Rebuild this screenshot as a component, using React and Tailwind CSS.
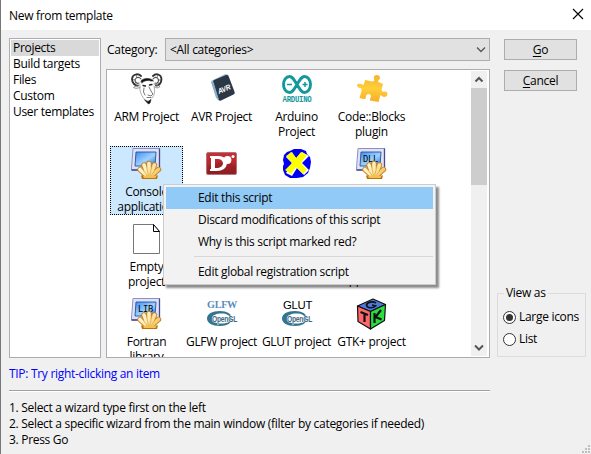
import React from "react";

function Gnu() {
  return (
    <svg width="32" height="32" viewBox="0 0 32 32" fill="none" stroke="#222" strokeLinecap="round">
      <path d="M10 3C7 0 1.500 1 1 6C1 10 4 13 7 12.500" strokeWidth="1.800" stroke="#333" />
      <path d="M10 6C8 3.500 4.500 4 4 7C4 9.500 6 11 8 10" strokeWidth="1.100" stroke="#555" />
      <path d="M22 3C25 0 30 1 30.500 6C30.500 10 28 13 25 12.500" strokeWidth="1.800" stroke="#333" />
      <path d="M22 6C24 3.500 27 4 27.500 7C27.500 9.500 26 11 24 10" strokeWidth="1.100" stroke="#555" />
      <path d="M1.500 7C2.500 6.500 3.500 6.500 4 7M3 11L5 9.500M5 2L6 4.500M30 7L27.500 7M28.500 11L26.500 9.500M27 2L26 4.500" strokeWidth=".6" />
      <path d="M10 8C12 4.500 20 4.500 22.500 8L20 8C17 7 13 7.500 11 10Z" fill="#111" strokeWidth=".6" />
      <path d="M9 12C6 13 4 13 2.500 14.500C5 16 7 15 9 14.500M23 11C25 12 27 12 29 13.500C27 15.500 25 15 23.500 14" stroke="#777" strokeWidth=".8" />
      <path d="M9 13C8 19 11 23 14 27M23 13C24 18 24 22 21 25" stroke="#999" strokeWidth=".8" />
      <path d="M12 12.500L14.500 13M18.500 12L21 11.500" strokeWidth="1.300" />
      <path d="M13 15L12.500 19L14 22M18 14L20 18L22 21L20 23L17 22M16 24.500L20 24.500" stroke="#666" strokeWidth=".9" />
      <path d="M14 27L17 28.500L20 26.500L19 30L17.500 31L15.500 29Z" fill="#111" strokeWidth=".7" />
    </svg>
  );
}

function Avr() {
  return (
    <svg width="32" height="32" viewBox="0 0 32 32">
      <path d="M5 8L19 1L22 1.500L29 20L25 22L13 28L10 25Z" fill="#a9c7dc" />
      <path d="M7 9Q7 7.500 8 7L20 2Q22 1.500 22.500 3L28.500 19Q29 21 27.500 21.500L15 27.500Q13 28 12.500 26.500Z" fill="#2c3745" />
      <path d="M5 9L7.500 9L13 27L10 24Z" fill="#86aeca" />
      <text x="11" y="19" transform="rotate(-22 17 15)" textLength="13" lengthAdjust="spacingAndGlyphs" fill="#fff" className="font-['Liberation_Sans'] text-[7.500px] font-bold italic">AVR</text>
    </svg>
  );
}

function Arduino() {
  return (
    <svg width="32" height="32" viewBox="0 0 32 32">
      <g fill="none" stroke="#12989d" strokeWidth="2.900">
        <path d="M16 11.500C13 6.500 11.500 3.500 8.500 3.500C5 3.500 2.500 7 2.500 11.500C2.500 16 5 19.500 8.500 19.500C11.500 19.500 13 16.500 16 11.500C19 6.500 20.500 3.500 23.500 3.500C27 3.500 29.500 7 29.500 11.500C29.500 16 27 19.500 23.500 19.500C20.500 19.500 19 16.500 16 11.500Z" />
        <path d="M6 11.500H11M21.500 11.500H26.500M24 9V14" strokeWidth="1.500" />
      </g>
      <text x="1.500" y="28.500" textLength="29" lengthAdjust="spacingAndGlyphs" fill="#12989d" className="font-['Liberation_Mono'] text-[8.500px] font-bold">ARDUINO</text>
    </svg>
  );
}

function Puzzle() {
  return (
    <svg width="32" height="32" viewBox="0 0 32 32">
      <defs>
        <linearGradient id="pz" x1="0" y1="0" x2="0" y2="1">
          <stop offset="0" stopColor="#f5b42b" />
          <stop offset=".5" stopColor="#ffcf3b" />
          <stop offset="1" stopColor="#f9ad25" />
        </linearGradient>
      </defs>
      <path d="M9 7L16 8.500Q19 8 18 6Q17 2.500 20.500 2Q24 2 24 5Q23.500 7 22 8Q22 9.500 25 10L27 11L25.500 17Q26 19.500 28.500 18.500Q31.500 18 31.500 21Q31 24 28 24Q26 23.500 24.500 22L22.500 29L14 27.500Q13.500 25.500 15 24Q15 21 12.500 21Q9.500 21.500 10 24Q10 26.500 7.500 26L3.500 25L5.500 18Q6 15.500 4.500 15Q1 15 1 12Q2 10 5 11Q7.500 12.500 8 11Z" fill="url(#pz)" />
    </svg>
  );
}

const rays = "M18 28L18 15.500M17 28L13 17M19 28L23.500 17M16 28L9 21.500M20 28L27.500 21.500";

function Shell({ label }) {
  return (
    <svg width="32" height="32" viewBox="0 0 32 32">
      <defs>
        <linearGradient id="screen" x1="0" y1="0" x2="1" y2="1">
          <stop offset="0" stopColor="#3c8df0" />
          <stop offset=".55" stopColor="#9ed2ff" />
          <stop offset="1" stopColor="#1f6fdc" />
        </linearGradient>
        <linearGradient id="shellgold" gradientUnits="userSpaceOnUse" x1="9" y1="14" x2="28" y2="28">
          <stop offset="0" stopColor="#fffae0" />
          <stop offset=".5" stopColor="#ffeaae" />
          <stop offset="1" stopColor="#f3bd50" />
        </linearGradient>
      </defs>
      <path d="M2 .5H28.500V22H.5V20Z" fill="#dfe2f7" stroke="#8e90c0" strokeWidth="1" />
      <path d="M28.500 .5V22H.5" fill="none" stroke="#454a91" strokeWidth="1.300" />
      <path d="M5 4H25L24 18H4Z" fill="url(#screen)" stroke="#2450a0" strokeWidth=".9" />
      {label && (
        <text x="7" y="13.500" textLength="15" lengthAdjust="spacingAndGlyphs" fill="#000" className="font-['DejaVu_Sans_Mono'] text-[9.500px]">{label}</text>
      )}
      <path d={rays} stroke="#c88420" strokeWidth="5.400" strokeLinecap="round" />
      <path d="M10 27.500H27L26 31H11Z" fill="#b8720f" />
      <path d={rays} stroke="url(#shellgold)" strokeWidth="3.600" strokeLinecap="round" />
      <path d="M17.500 28L15.500 18M18.500 28L21 18M16.500 28L11 20.500M20 28L25.500 20" stroke="#d99c33" strokeWidth=".7" />
      <path d="M12 28L18 27L25.500 28L24.500 30H13Z" fill="#f5c04f" />
    </svg>
  );
}

function DLang() {
  return (
    <svg width="32" height="32" viewBox="0 0 32 32">
      <defs>
        <linearGradient id="dred" x1="0" y1="0" x2="0" y2="1">
          <stop offset="0" stopColor="#c23238" />
          <stop offset=".5" stopColor="#b8262d" />
          <stop offset="1" stopColor="#8d1d22" />
        </linearGradient>
      </defs>
      <rect x=".5" y="4.500" width="30" height="22" rx="1.500" fill="url(#dred)" stroke="#b87276" />
      <path d="M2 19Q16 9 30 18V25H2Z" fill="#7f1f24" opacity=".3" />
      <path fillRule="evenodd" d="M4 8H12Q18 8 20.500 12Q22 18 18 21Q15 23 11 23H4V21H5V10H4ZM9 11V20H12Q17 19 17 15Q16 11 12 11Z" fill="#fff" />
      <circle cx="21.500" cy="12" r="3.900" fill="#fff" />
      <circle cx="27" cy="8.500" r="1.500" fill="#fff" />
    </svg>
  );
}

function Cross() {
  return (
    <svg width="32" height="32" viewBox="0 0 32 32">
      <path d="M9 3L13 1H20L25 3L26 6L29 9L30 14L29 20L27 25L22 29L16 30H9L4 27L2 22V18L3 16L2 12L3 7L6 4Z" fill="#0000f5" />
      <path d="M5 9L10 4L16 11L21 4L28 8L21 15L28 22L23 27L16 20L11 28L5 25L11 15Z" fill="#fff" />
      <path d="M5 8L11 4L15 10L20 4L26 7L20 15L26 22L22 26L15 19L10 26L4 22L11 15Z" fill="#ff0" />
    </svg>
  );
}

function Page() {
  return (
    <svg width="32" height="32" viewBox="0 0 32 32" fill="#fff">
      <path d="M2.500 1.500H22.500L28.500 8.500V30.500H2.500Z" stroke="#777" />
      <path d="M22.500 1.500V8.500H28.500Z" stroke="#000" />
    </svg>
  );
}

function OpenGl({ title, serif }) {
  return (
    <svg width="32" height="32" viewBox="0 0 32 32">
      {serif ? (
        <text x="1" y="10" textLength="30" lengthAdjust="spacingAndGlyphs" fill="#5a8cbc" className="font-['Liberation_Serif'] text-[10.500px] font-bold">{title}</text>
      ) : (
        <text x="2" y="10.500" textLength="29" lengthAdjust="spacingAndGlyphs" fill="#000" className="font-['Liberation_Sans'] text-[11px]">{title}</text>
      )}
      <path fillRule="evenodd" d="M14 13C21 13 26 16 26 20.500C26 25 21 28 14 28C6 28 1 25 1 20.500C1 16 6 13 14 13ZM15.500 15.500C10 15.500 6 17.500 6 20.500C6 23.500 10 25.500 15.500 25.500C21 25.500 24 23.500 24 20.500C24 17.500 21 15.500 15.500 15.500Z" fill="#33748f" />
      <text x="6" y="23.500" textLength="25" lengthAdjust="spacingAndGlyphs" fill="#44697f" stroke="#fff" strokeWidth=".8" paintOrder="stroke" className="font-['Liberation_Sans'] text-[8.500px] font-bold">OpenGL</text>
    </svg>
  );
}

function Gtk() {
  return (
    <svg width="32" height="32" viewBox="0 0 32 32" stroke="#111" strokeWidth="1.200" strokeLinejoin="round">
      <path d="M1.500 8L17 1L29.500 6.500L14.500 13.500Z" fill="#4e79df" />
      <path d="M1.500 8L14.500 13.500V31L2 23.500Z" fill="#ff6868" />
      <path d="M14.500 13.500L29.500 6.500L28.500 22.500L14.500 31Z" fill="#29df40" />
      <g fill="none" strokeWidth="2.200" strokeLinejoin="miter">
        <path d="M20 5C17 3 11 4 10.500 7C11 10.500 17 10.500 19.500 8L16 7" strokeWidth="1.700" />
        <path d="M4.500 14L12 17M8.500 15V24" />
        <path d="M18.500 15V25M25 12L19.500 19L25.500 21.500" />
      </g>
    </svg>
  );
}

const items = [
  [<Gnu />, "ARM Project"],
  [<Avr />, "AVR Project"],
  [<Arduino />, "Arduino", "Project"],
  [<Puzzle />, "Code::Blocks", "plugin"],
  [<Shell />, "Console", "application"],
  [<DLang />],
  [<Cross />],
  [<Shell label="DLL" />],
  [<Page />, "Empty", "project"],
  [null],
  [null],
  [null, "\u00a0", "application"],
  [<Shell label="LIB" />, "Fortran", "library"],
  [<OpenGl title="GLFW" serif />, "GLFW project"],
  [<OpenGl title="GLUT" />, "GLUT project"],
  [<Gtk />, "GTK+ project"],
];

function Chevron({ up, thick }) {
  return (
    <svg width="10" height="7" viewBox="0 0 10 7" fill="none" stroke="#555" strokeWidth={thick ? 2 : 1.3}>
      <path d={up ? "M1.500 5.500L5 2L8.500 5.500" : "M1 1.500L5 5.500L9 1.500"} />
    </svg>
  );
}

function Radio({ checked, children }) {
  return (
    <div className="flex h-[22px] items-center gap-[3px]">
      <span className="flex size-[13px] shrink-0 items-center justify-center rounded-full border border-[#333] bg-white">
        {checked && <span className="size-[7px] rounded-full bg-[#333]" />}
      </span>
      <span>{children}</span>
    </div>
  );
}

function MenuItem({ active, children }) {
  return <div className={active ? "h-[22px] bg-[#91c9f7] pl-8 leading-[22px]" : "h-[22px] pl-8 leading-[22px]"}>{children}</div>;
}

export default function App() {
  return (
    <div className="relative flex h-[454px] w-[591px] flex-col overflow-hidden border-l border-[#777] bg-[#f0f0f0] font-['Open_Sans','Noto_Sans',sans-serif] text-[12px] tracking-[-0.3px] whitespace-nowrap text-black">
      <header className="flex h-[30px] shrink-0 items-center justify-between bg-white pr-[7px] pl-2">
        <span className="pt-px">New from template</span>
        <svg width="12" height="12" viewBox="0 0 12 12" stroke="#000" strokeWidth="1.100" className="mt-[-2px]">
          <path d="M1 1L11 11M11 1L1 11" />
        </svg>
      </header>
      <div className="flex pt-2 pl-2">
        <ul className="h-[320px] w-[92px] shrink-0 border border-[#acacb2] bg-white p-px leading-4">
          <li className="bg-[#d9d9d9] pl-[2px]">Projects</li>
          <li className="pl-[2px]">Build targets</li>
          <li className="pl-[2px]">Files</li>
          <li className="pl-[2px]">Custom</li>
          <li className="pl-[2px]">User templates</li>
        </ul>
        <div className="ml-[5px] flex w-[384px] shrink-0 flex-col gap-2">
          <div className="flex h-[23px] items-center">
            <span className="w-[59px] pl-px">Category:</span>
            <div className="flex h-[23px] flex-1 items-center justify-between border border-[#adadad] bg-[#e1e1e1] pr-[3px] pl-1">
              <span>&lt;All categories&gt;</span>
              <Chevron />
            </div>
          </div>
          <div className="flex h-[289px] overflow-hidden border border-[#acacb2] bg-white">
            <div className="grid w-[364px] shrink-0 auto-rows-[75px] grid-cols-[repeat(4,75px)] pt-[3px] pl-[2px]">
              {items.map(([icon, a, b], i) => (
                <div
                  key={i}
                  className={
                    i === 4
                      ? "mt-[-2px] ml-px flex h-[69px] w-[73px] flex-col items-center border border-dotted border-black bg-[#cce8ff] pt-px leading-[15px]"
                      : "flex h-[75px] w-[75px] flex-col items-center leading-[15px]"
                  }
                >
                  <div className={icon ? "mb-1 h-8 w-8 shrink-0" : "mb-[2px] h-8 w-8 shrink-0"}>{icon}</div>
                  <span>{a}</span>
                  <span>{b}</span>
                </div>
              ))}
            </div>
            <div className="my-px flex w-4 shrink-0 flex-col items-center bg-[#f0f0f0]">
              <div className="flex h-[17px] items-center"><Chevron up thick /></div>
              <div className="h-[97px] w-full bg-[#cdcdcd]" />
              <div className="mt-auto flex h-[17px] items-center"><Chevron thick /></div>
            </div>
          </div>
        </div>
        <div className="ml-[7px] flex w-[89px] shrink-0 flex-col">
          <button className="mt-px ml-[7px] h-[21px] w-[73px] border border-[#adadad] bg-[#e1e1e1] leading-[19px]"><u className="underline-offset-2">G</u>o</button>
          <button className="mt-[10px] ml-[7px] h-[21px] w-[73px] border border-[#adadad] bg-[#e1e1e1] leading-[19px]"><u className="underline-offset-2">C</u>ancel</button>
          <fieldset className="mt-[194px] h-[72px] border border-[#dcdcdc] pl-[5px]">
            <legend className="ml-[1px] px-[2px] leading-4">View as</legend>
            <div className="pt-[5px]">
              <Radio checked>Large icons</Radio>
              <Radio>List</Radio>
            </div>
          </fieldset>
        </div>
      </div>
      <footer className="w-[489px] pl-2">
        <p className="h-[32px] pt-[7px] leading-[18px] text-[#00f]">TIP: Try right-clicking an item</p>
        <div className="h-[2px] border-t border-b border-t-[#a0a0a0] border-b-white" />
        <div className="pt-[8px] leading-4">
          <p>1. Select a wizard type first on the left</p>
          <p>2. Select a specific wizard from the main window (filter by categories if needed)</p>
          <p>3. Press Go</p>
        </div>
      </footer>
      <div className="absolute top-[184px] left-[162px] h-[101px] w-[273px] border border-[#ccc] bg-[#f2f2f2] p-[2px] shadow-[3px_3px_2px_rgba(0,0,0,0.45)]">
        <MenuItem active>Edit this script</MenuItem>
        <MenuItem>Discard modifications of this script</MenuItem>
        <MenuItem>Why is this script marked red?</MenuItem>
        <div className="mt-[3px] mb-[4px] ml-[28px] h-px bg-[#d7d7d7]" />
        <MenuItem>Edit global registration script</MenuItem>
      </div>
      <svg width="9" height="9" viewBox="0 0 9 9" fill="#bfbfbf" className="absolute right-0 bottom-0">
        <path d="M6 0H8V2H6ZM3 3H5V5H3ZM6 3H8V5H6ZM0 6H2V8H0ZM3 6H5V8H3ZM6 6H8V8H6Z" />
      </svg>
    </div>
  );
}
